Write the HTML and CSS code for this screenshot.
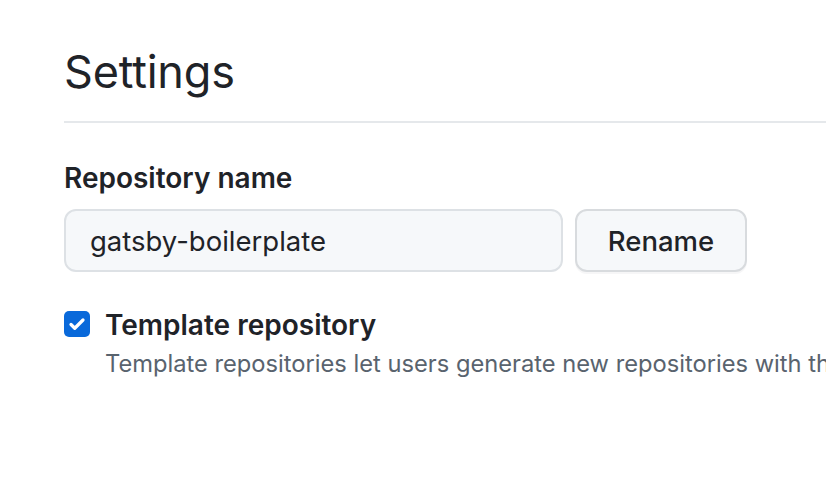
FILE: index.html
```html
<!DOCTYPE html>
<html>
<head>
<meta charset="utf-8">
<link rel="stylesheet" href="styles.css">
</head>
<body>
<div class="page">
  <h1 class="title">Settings</h1>
  <div class="divider"></div>
  <label class="label" for="repo">Repository name</label>
  <div class="row">
    <input id="repo" class="input" type="text" value="gatsby-boilerplate">
    <button class="btn">Rename</button>
  </div>
  <div class="check-row">
    <span class="checkbox">
      <svg width="20" height="20" viewBox="0 0 16 16"><path d="M3.2 8.4l3 3L12.8 4.8" fill="none" stroke="#fff" stroke-width="2.6" stroke-linecap="round" stroke-linejoin="round"/></svg>
    </span>
    <div class="check-text">
      <div class="check-title">Template repository</div>
      <div class="check-desc">Template repositories let users generate new repositories with the same directory structure and files.</div>
    </div>
  </div>
</div>
</body>
</html>
```
FILE: styles.css
```css
html, body {
  margin: 0;
  padding: 0;
  background: #fff;
  overflow: hidden;
}
body {
  font-family: Inter, "Liberation Sans", sans-serif;
  color: #1f2328;
}
.page {
  padding: 42px 0 0 64px;
}
.title {
  margin: 0;
  font-size: 45px;
  font-weight: 400;
  line-height: 60px;
  letter-spacing: -0.2px;
}
.divider {
  height: 2px;
  background: #e5e8eb;
  margin-top: 19px;
}
.label {
  display: block;
  margin-top: 37px;
  font-size: 28px;
  font-weight: 600;
  line-height: 36px;
}
.row {
  display: flex;
  gap: 12px;
  margin-top: 13px;
}
.input {
  box-sizing: border-box;
  width: 499px;
  height: 63px;
  border: 2px solid #dde1e5;
  border-radius: 12px;
  background: #f6f8fa;
  padding: 0 24px;
  font-family: inherit;
  font-size: 27.5px;
  color: #1f2328;
  outline: none;
}
.btn {
  box-sizing: border-box;
  width: 172px;
  height: 63px;
  border: 2px solid #d8dbde;
  border-radius: 12px;
  background: #f6f8fa;
  font-family: inherit;
  font-size: 27.5px;
  font-weight: 500;
  color: #1f2328;
  box-shadow: 0 2px 0 rgba(31,35,40,0.04);
}
.check-row {
  display: flex;
  gap: 15px;
  margin-top: 38px;
}
.checkbox {
  flex: none;
  width: 26px;
  height: 26px;
  border-radius: 5px;
  background: #0969da;
  display: flex;
  align-items: center;
  justify-content: center;
  margin-top: 1px;
}
.check-text {
  white-space: nowrap;
}
.check-title {
  font-size: 28px;
  font-weight: 600;
  line-height: 30px;
}
.check-desc {
  margin-top: 8px;
  font-size: 23.7px;
  line-height: 32px;
  color: #59636e;
}
```
